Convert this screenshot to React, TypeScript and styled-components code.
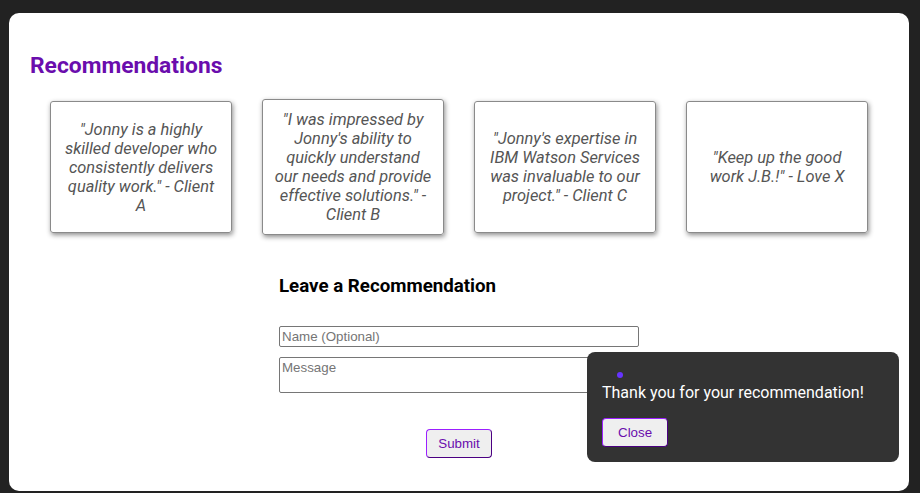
import React from "react";
import styled, { createGlobalStyle } from "styled-components";

const Global = createGlobalStyle`
  html, body { margin: 0; padding: 0; background: #222222; }
  body { font-family: Roboto, "Liberation Sans", sans-serif; }
  * { box-sizing: border-box; }
`;

const Page = styled.div`
  padding: 13px 11px 2px 9px;
  height: 493px;
  overflow: hidden;
`;

const Panel = styled.main`
  background: #ffffff;
  border-radius: 10px;
  height: 478px;
  padding: 40px 20px 20px 20px;
`;

const Title = styled.h2`
  margin: 0 0 20px 1px;
  font-family: Roboto, sans-serif;
  font-size: 22.8px;
  font-weight: 700;
  color: #6a0dad;
  line-height: 26px;
`;

const CardRow = styled.section`
  display: flex;
  justify-content: center;
  align-items: center;
  gap: 30px;
`;

const Card = styled.div`
  width: 182px;
  min-height: 132px;
  padding: 10px 11px;
  border: 1px solid #8a8a8a;
  border-radius: 3px;
  box-shadow: 1px 2px 5px rgba(0, 0, 0, 0.45);
  display: flex;
  align-items: center;
  justify-content: center;
`;

const Quote = styled.p`
  margin: 0;
  font-family: Roboto, sans-serif;
  font-style: italic;
  font-size: 16.4px;
  line-height: 19px;
  color: #555555;
  text-align: center;
`;

const FormSection = styled.section`
  width: 360px;
  margin: 40px auto 0 auto;
`;

const FormTitle = styled.h3`
  margin: 0 0 29px 0;
  font-family: Roboto, sans-serif;
  font-size: 18.72px;
  font-weight: 700;
  line-height: 22px;
  color: #000;
`;

const Form = styled.form`
  display: flex;
  flex-direction: column;
  align-items: stretch;
`;

const NameInput = styled.input`
  width: 360px;
  height: 21px;
  padding: 1px 2px;
  border: 1px solid #767676;
  border-radius: 2px;
  font-family: "Liberation Sans", Arial, sans-serif;
  font-size: 13.33px;
  &::placeholder { color: #757575; }
`;

const MessageInput = styled.textarea`
  width: 360px;
  height: 36px;
  margin-top: 10px;
  padding: 2px 2px;
  border: 1px solid #767676;
  border-radius: 2px;
  resize: none;
  font-family: "Liberation Sans", Arial, sans-serif;
  font-size: 13.33px;
  &::placeholder { color: #757575; }
`;

const PurpleButton = styled.button<{ $padX: number }>`
  height: 29px;
  padding: 0 ${(p) => p.$padX}px;
  background: #efefef;
  color: #6a0dad;
  border: 1px solid;
  border-color: #9b1fff #4b0082 #4b0082 #9b1fff;
  border-radius: 4px;
  font-family: "Liberation Sans", Arial, sans-serif;
  font-size: 13.33px;
  cursor: pointer;
`;

const SubmitWrap = styled.div`
  display: flex;
  justify-content: center;
  margin-top: 36px;
`;

const Toast = styled.div`
  position: fixed;
  left: 587px;
  top: 352px;
  width: 312px;
  height: 110px;
  background: #333333;
  border-radius: 8px;
  padding: 20px 15px 15px 15px;
  display: flex;
  flex-direction: column;
  align-items: flex-start;
`;

const Dot = styled.span`
  display: block;
  width: 6px;
  height: 6px;
  margin-left: 15px;
  border-radius: 50%;
  background: #6633ff;
`;

const ToastText = styled.p`
  margin: 5px 0 0 0;
  font-family: Roboto, sans-serif;
  font-size: 16px;
  line-height: 19px;
  color: #ffffff;
`;

const ToastActions = styled.div`
  margin-top: 16px;
`;

const quotes = [
  '"Jonny is a highly skilled developer who consistently delivers quality work." - Client A',
  '"I was impressed by Jonny\'s ability to quickly understand our needs and provide effective solutions." - Client B',
  '"Jonny\'s expertise in IBM Watson Services was invaluable to our project." - Client C',
  '"Keep up the good work J.B.!" - Love X',
];

export default function App() {
  return (
    <>
      <Global />
      <Page>
        <Panel>
          <Title>Recommendations</Title>
          <CardRow>
            {quotes.map((q) => (
              <Card key={q}>
                <Quote>{q}</Quote>
              </Card>
            ))}
          </CardRow>
          <FormSection>
            <FormTitle>Leave a Recommendation</FormTitle>
            <Form onSubmit={(e) => e.preventDefault()}>
              <NameInput placeholder="Name (Optional)" />
              <MessageInput placeholder="Message" />
              <SubmitWrap>
                <PurpleButton $padX={11} type="submit">Submit</PurpleButton>
              </SubmitWrap>
            </Form>
          </FormSection>
        </Panel>
      </Page>
      <Toast>
        <Dot />
        <ToastText>Thank you for your recommendation!</ToastText>
        <ToastActions>
          <PurpleButton $padX={15} type="button">Close</PurpleButton>
        </ToastActions>
      </Toast>
    </>
  );
}
